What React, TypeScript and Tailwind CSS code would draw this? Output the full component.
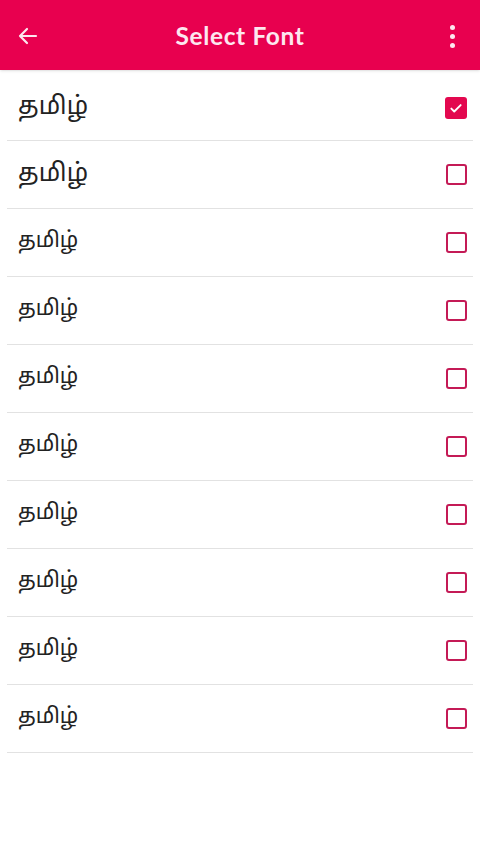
import React from 'react';

const rows = [
  { size: 'text-[25px]', checked: true },
  { size: 'text-[25px]', checked: false },
  { size: 'text-[21.5px]', checked: false },
  { size: 'text-[21.5px]', checked: false },
  { size: 'text-[21.5px]', checked: false },
  { size: 'text-[21.5px]', checked: false },
  { size: 'text-[21.5px]', checked: false },
  { size: 'text-[21.5px]', checked: false },
  { size: 'text-[21.5px]', checked: false },
  { size: 'text-[21.5px]', checked: false },
];

const Check: React.FC<{ checked: boolean }> = ({ checked }) =>
  checked ? (
    <div className="w-[22px] h-[22px] rounded-[3px] bg-[#e3084f] flex items-center justify-center">
      <svg width="14" height="14" viewBox="0 0 24 24" fill="none" stroke="white" strokeWidth="3.2" strokeLinecap="round" strokeLinejoin="round">
        <path d="M4 13l5 5L20 7" />
      </svg>
    </div>
  ) : (
    <div className="w-[21px] h-[21px] rounded-[3px] border-2 border-[#c41a56]" />
  );

export default function App() {
  return (
    <div className="w-[480px] h-[854px] bg-white" style={{ fontFamily: 'Lato, "Noto Sans", sans-serif' }}>
      {/* App bar */}
      <div className="h-[70px] bg-[#e8004f] flex items-center justify-between px-4 pt-[2px] shadow-sm">
        <svg width="24" height="24" viewBox="0 0 24 24" fill="none" stroke="#fde7ef" strokeWidth="2.2" strokeLinecap="round" strokeLinejoin="round">
          <path d="M20 12H4M11 5l-7 7 7 7" />
        </svg>
        <h1 className="text-[24.5px] font-bold text-[#fde7ef] tracking-wide">Select Font</h1>
        <div className="flex flex-col gap-[4px] items-center w-6">
          <span className="w-[5px] h-[5px] rounded-full bg-[#fde7ef]" />
          <span className="w-[5px] h-[5px] rounded-full bg-[#fde7ef]" />
          <span className="w-[5px] h-[5px] rounded-full bg-[#fde7ef]" />
        </div>
      </div>

      {/* Font list */}
      <div className="mx-[7px]">
        {rows.map((r, i) => (
          <div
            key={i}
            className={`${i === 0 ? 'h-[71px] pt-[6px]' : 'h-[68px]'} border-b border-[#e2e2e2] flex items-center justify-between pl-[11px] pr-[6px]`}
          >
            <span
              className={`${r.size} text-[#222]`}
              style={{ fontFamily: '"Noto Sans Tamil", "Lohit Tamil", "Noto Sans", sans-serif' }}
            >
              தமிழ்
            </span>
            <Check checked={r.checked} />
          </div>
        ))}
      </div>
    </div>
  );
}
